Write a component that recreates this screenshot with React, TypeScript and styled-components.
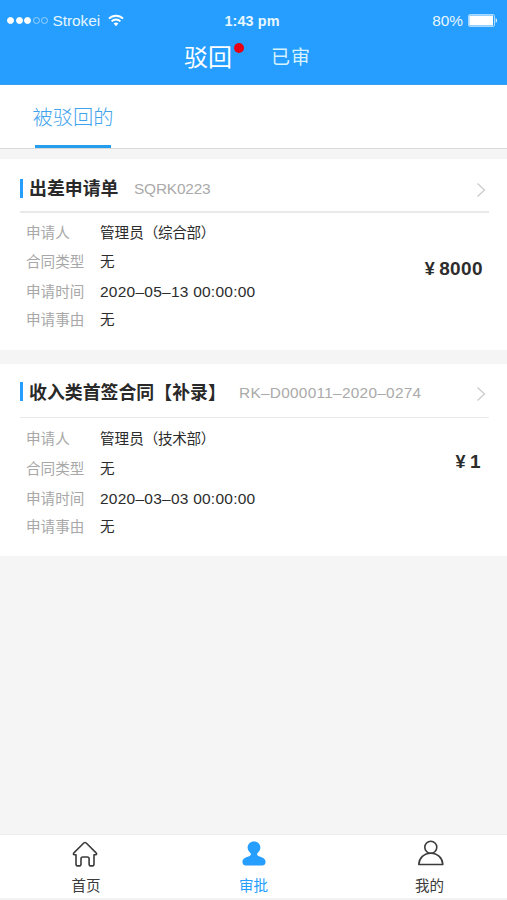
import React from "react";
import styled, { createGlobalStyle } from "styled-components";

const GlobalStyle = createGlobalStyle`
  * { box-sizing: border-box; }
  body {
    margin: 0;
    background: #f5f5f5;
    font-family: "Liberation Sans", "Noto Sans CJK SC", sans-serif;
  }
`;

const Screen = styled.div`
  width: 507px;
  height: 900px;
  display: flex;
  flex-direction: column;
  overflow: hidden;
  background: #f5f5f5;
  white-space: nowrap;
`;

const Header = styled.header`
  flex: none;
  height: 85px;
  background: #259eff;
  border-bottom: 1px solid #3b9ff0;
  color: #fff;
`;

const StatusBar = styled.div`
  height: 40px;
  display: grid;
  grid-template-columns: 1fr auto 1fr;
  align-items: center;
  padding: 0 9px 0 7px;
  color: #e8f6ff;
  font-size: 15px;
  line-height: 40px;
`;

const Carrier = styled.div`
  display: flex;
  align-items: center;
`;

const SignalDots = styled.div`
  display: flex;
  gap: 1.6px;
  margin-right: 4px;
`;

const Dot = styled.i<{ $on: boolean }>`
  width: 7px;
  height: 7px;
  border-radius: 50%;
  border: 1px solid ${(p) => (p.$on ? "#fff" : "#9bd2ff")};
  background: ${(p) => (p.$on ? "#fff" : "transparent")};
`;

const CarrierName = styled.span`
  width: 49px;
  margin-right: 7px;
  font-size: 15.4px;
  padding-top: 1px;
`;

const Clock = styled.span`
  padding: 1px 1px 0 0;
  font-weight: 700;
  font-size: 14.4px;
  letter-spacing: 0.1px;
`;

const Battery = styled.div`
  display: flex;
  align-items: center;
  justify-content: flex-end;
  gap: 5px;
`;

const Percent = styled.span`
  padding-top: 1px;
  font-size: 15.4px;
`;

const NavTabs = styled.nav`
  display: flex;
  align-items: center;
  height: 36px;
  padding-left: 184px;
`;

const NavTab = styled.span<{ $active?: boolean }>`
  width: ${(p) => (p.$active ? 87 : 48)}px;
  color: ${(p) => (p.$active ? "#fff" : "#d5f2ff")};
  font-size: ${(p) => (p.$active ? 24 : 19)}px;
  letter-spacing: ${(p) => (p.$active ? 0 : 1)}px;
  line-height: ${(p) => (p.$active ? 34 : 36)}px;
  position: relative;
`;

const Badge = styled.i`
  position: absolute;
  left: 50px;
  top: 2px;
  width: 10px;
  height: 10px;
  border-radius: 50%;
  background: #e60012;
`;

const SubTabs = styled.div`
  flex: none;
  height: 64px;
  display: flex;
  padding-left: 32px;
  background: #fff;
  border-bottom: 1px solid #d9d9d9;
`;

const SubTab = styled.div`
  width: 82px;
  height: 63px;
  display: flex;
  flex-direction: column;
  align-items: center;
  justify-content: space-between;
  color: #3fa3ed;
  font-size: 20.3px;
  font-weight: 300;
  line-height: 66px;
`;

const SubTabLabel = styled.span`
  height: 60px;
`;

const Underline = styled.i`
  flex: none;
  width: 76px;
  height: 3px;
  background: #259eee;
`;

const List = styled.main`
  flex: 1;
  display: flex;
  flex-direction: column;
  gap: 14px;
  padding-top: 10px;
`;

const Card = styled.article<{ $height: number }>`
  height: ${(p) => p.$height}px;
  padding: 0 18px 0 20px;
  background: #fff;
`;

const CardHead = styled.div<{ $height: number; $line: number }>`
  height: ${(p) => p.$height}px;
  border-bottom: ${(p) => p.$line}px solid #e9e9e9;
  line-height: 60px;
  display: flex;
  align-items: flex-start;

  &::before {
    content: "";
    width: 3px;
    height: 19px;
    margin-top: ${(p) => (p.$line === 2 ? 20 : 18)}px;
    margin-right: 6px;
    background: #259eff;
  }
`;

const Title = styled.h2<{ $width: number; $lineHeight: number }>`
  margin: 0;
  width: ${(p) => p.$width}px;
  color: #292929;
  font-size: 17.9px;
  font-weight: 700;
  line-height: ${(p) => p.$lineHeight}px;
`;

const Code = styled.span<{ $spacing: number; $lineHeight: number }>`
  color: #aaa;
  font-size: 15.4px;
  letter-spacing: ${(p) => p.$spacing}px;
  line-height: ${(p) => p.$lineHeight}px;
`;

const Chevron = styled.svg<{ $top: number }>`
  width: 10px;
  height: 16px;
  margin-left: auto;
  margin-right: 3px;
  margin-top: ${(p) => p.$top}px;
  stroke: #cbcbcb;
  stroke-width: 1.3;
  fill: none;
`;

const CardBody = styled.div<{ $top: number }>`
  display: flex;
  justify-content: space-between;
  padding: ${(p) => p.$top}px 6px 0 6px;
`;

const Fields = styled.dl<{ $rows: string }>`
  margin: 0;
  display: grid;
  grid-template-columns: 74px auto;
  grid-template-rows: ${(p) => p.$rows};
  align-items: center;
  font-size: 14.6px;
  line-height: 24px;
`;

const Label = styled.dt`
  color: #a8a8a8;
`;

const Value = styled.dd<{ $numeric?: boolean }>`
  margin: 0;
  color: #2c2c2c;
  font-size: ${(p) => (p.$numeric ? 15.5 : 14.6)}px;
  letter-spacing: ${(p) => (p.$numeric ? 0.24 : 0)}px;
`;

const Department = styled.span`
  letter-spacing: -0.35px;
`;

const Amount = styled.strong<{ $top: number; $right: number }>`
  margin-top: ${(p) => p.$top}px;
  margin-right: ${(p) => p.$right}px;
  color: #2c2c2c;
  font-size: 19px;
  line-height: 24px;
  display: flex;
  gap: 4px;
  letter-spacing: 0.4px;
`;

const Yen = styled.span`
  font-size: 18px;
`;

const TabBar = styled.nav`
  flex: none;
  height: 66px;
  display: grid;
  grid-template-columns: 172px 163px 1fr;
  background: #fff;
  border-top: 1px solid #eee;
  border-bottom: 2px solid #f3f3f3;
`;

const TabItem = styled.a<{ $active?: boolean; $inset?: number }>`
  display: flex;
  flex-direction: column;
  align-items: center;
  padding-top: 4px;
  padding-left: ${(p) => p.$inset ?? 0}px;
  color: ${(p) => (p.$active ? "#259eff" : "#3b3b3b")};
  font-size: 14.5px;
  line-height: 34px;

  svg {
    flex: none;
    width: 30px;
    height: 30px;
  }
`;

const TabLabel = styled.span`
  height: 30px;
`;

const WifiIcon = () => (
  <svg width="16" height="13" viewBox="0 0 16 13" fill="none" stroke="#fff" strokeWidth="1.9">
    <path d="M1 4.6a10 10 0 0 1 14 0M3.6 7.4a6.2 6.2 0 0 1 8.8 0" />
    <path d="M5.6 9.6a3.5 3.5 0 0 1 4.8 0L8 12.2Z" fill="#fff" stroke="none" />
  </svg>
);

const BatteryIcon = () => (
  <svg width="30" height="13" viewBox="0 0 30 13">
    <rect x="0.5" y="0.5" width="26" height="12" rx="1.5" fill="none" stroke="#a7d8ff" />
    <rect x="1.3" y="1.5" width="23.7" height="10" fill="#fff" />
    <path d="M27.7 4v5c1.7-.8 1.7-4.2 0-5Z" fill="#e6f5ff" />
  </svg>
);

const HomeIcon = () => (
  <svg viewBox="0 0 30 30" fill="none" stroke="currentColor" strokeWidth="1.6" strokeLinejoin="round">
    <path d="M5 15.7h-1.5c-1.3 0-1.4-1.1-.6-1.8L12.8 4q1.2-1 2.4 0l9.9 9.9c.8.7.7 1.8-.6 1.8h-1.5v9.2q0 2-2 2h-.9q-2 0-2-2v-5.1q0-1.8-1.8-1.8h-4.5q-1.8 0-1.8 1.8v5.1q0 2-2 2h-1q-2 0-2-2Z" />
  </svg>
);

const ApproveIcon = () => (
  <svg viewBox="0 0 30 30" fill="currentColor">
    <path d="M15 2.4c-3.8 0-6.4 2.7-6.4 6.2 0 2.2 1.1 4 2.8 5.4.8 1 .7 2.1-.4 2.8-1.7 1.3-4.5 1.3-6.2 2.9C3.5 20.8 3.2 22.5 3.6 24.3q.4 2.1 2.6 2.1h17.6q2.2 0 2.6-2.1c.4-1.8.1-3.5-1.2-4.6-1.7-1.6-4.5-1.6-6.2-2.9-1.1-.7-1.2-1.8-.4-2.8 1.7-1.4 2.8-3.2 2.8-5.4 0-3.5-2.6-6.2-6.4-6.2Z" />
  </svg>
);

const ProfileIcon = () => (
  <svg viewBox="0 0 30 30" fill="none" stroke="currentColor" strokeWidth="1.6" strokeLinejoin="round">
    <circle cx="15.8" cy="8.2" r="6" />
    <path d="M3.8 25.5c.3-6.5 5.2-11.3 12-11.3s11.7 4.8 12 11.3Z" />
  </svg>
);

const requests = [
  {
    title: "出差申请单",
    code: "SQRK0223",
    applicant: "管理员",
    department: "（综合部）",
    time: "2020–05–13 00:00:00",
    amount: "8000",
    height: 191,
    headHeight: 54,
    line: 2,
    titleLine: 60,
    codeLine: 60,
    chevronTop: 23,
    titleWidth: 105,
    codeSpacing: -0.18,
    bodyTop: 5,
    rows: "29px 30px 30px 25px",
    amountTop: 39,
    amountRight: 0,
  },
  {
    title: "收入类首签合同【补录】",
    code: "RK–D000011–2020–0274",
    applicant: "管理员",
    department: "（技术部）",
    time: "2020–03–03 00:00:00",
    amount: "1",
    height: 192,
    headHeight: 54,
    line: 1,
    titleLine: 58,
    codeLine: 58,
    chevronTop: 22,
    titleWidth: 210,
    codeSpacing: 0.28,
    bodyTop: 6,
    rows: "30px 30px 30px 25px",
    amountTop: 26,
    amountRight: 2,
  },
];

export default function App() {
  return (
    <>
      <GlobalStyle />
      <Screen>
        <Header>
          <StatusBar>
            <Carrier>
              <SignalDots>
                {[true, true, true, false, false].map((on, i) => (
                  <Dot key={i} $on={on} />
                ))}
              </SignalDots>
              <CarrierName>Strokei</CarrierName>
              <WifiIcon />
            </Carrier>
            <Clock>1:43 pm</Clock>
            <Battery>
              <Percent>80%</Percent>
              <BatteryIcon />
            </Battery>
          </StatusBar>
          <NavTabs>
            <NavTab $active>
              驳回
              <Badge />
            </NavTab>
            <NavTab>已审</NavTab>
          </NavTabs>
        </Header>
        <SubTabs>
          <SubTab>
            <SubTabLabel>被驳回的</SubTabLabel>
            <Underline />
          </SubTab>
        </SubTabs>
        <List>
          {requests.map((r) => (
            <Card key={r.code} $height={r.height}>
              <CardHead $height={r.headHeight} $line={r.line}>
                <Title $width={r.titleWidth} $lineHeight={r.titleLine}>
                  {r.title}
                </Title>
                <Code $spacing={r.codeSpacing} $lineHeight={r.codeLine}>
                  {r.code}
                </Code>
                <Chevron $top={r.chevronTop} viewBox="0 0 10 16">
                  <path d="M1.5 1.5 8.5 8l-7 6.5" />
                </Chevron>
              </CardHead>
              <CardBody $top={r.bodyTop}>
                <Fields $rows={r.rows}>
                  <Label>申请人</Label>
                  <Value>
                    {r.applicant}
                    <Department>{r.department}</Department>
                  </Value>
                  <Label>合同类型</Label>
                  <Value>无</Value>
                  <Label>申请时间</Label>
                  <Value $numeric>{r.time}</Value>
                  <Label>申请事由</Label>
                  <Value>无</Value>
                </Fields>
                <Amount $top={r.amountTop} $right={r.amountRight}>
                  <Yen>¥</Yen>
                  {r.amount}
                </Amount>
              </CardBody>
            </Card>
          ))}
        </List>
        <TabBar>
          <TabItem>
            <HomeIcon />
            <TabLabel>首页</TabLabel>
          </TabItem>
          <TabItem $active>
            <ApproveIcon />
            <TabLabel>审批</TabLabel>
          </TabItem>
          <TabItem $inset={17}>
            <ProfileIcon />
            <TabLabel>我的</TabLabel>
          </TabItem>
        </TabBar>
      </Screen>
    </>
  );
}
